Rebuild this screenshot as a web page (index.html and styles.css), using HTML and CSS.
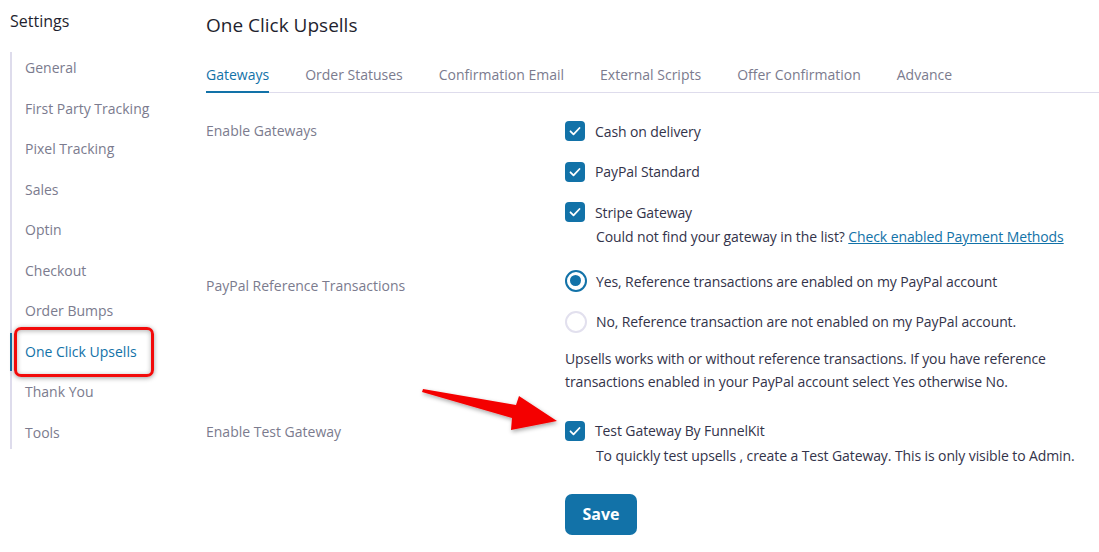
FILE: index.html
```html
<!DOCTYPE html>
<html lang="en">
<head>
    <meta charset="UTF-8">
    <meta name="viewport" content="width=device-width, initial-scale=1.0">
    <title>One Click Upsells - Settings</title>
    <link rel="stylesheet" href="styles.css">
</head>
<body>

    <div class="page">

        <!-- Settings sidebar -->
        <aside class="sidebar">
            <h2 class="sidebar-title">Settings</h2>
            <ul class="side-nav">
                <li>General</li>
                <li>First Party Tracking</li>
                <li>Pixel Tracking</li>
                <li>Sales</li>
                <li>Optin</li>
                <li>Checkout</li>
                <li>Order Bumps</li>
                <li class="active">One Click Upsells</li>
                <li>Thank You</li>
                <li>Tools</li>
            </ul>
        </aside>

        <!-- Main settings panel -->
        <main class="main">
            <h1 class="page-title">One Click Upsells</h1>

            <nav class="tabs">
                <a class="tab active">Gateways</a>
                <a class="tab">Order Statuses</a>
                <a class="tab">Confirmation Email</a>
                <a class="tab">External Scripts</a>
                <a class="tab">Offer Confirmation</a>
                <a class="tab">Advance</a>
            </nav>

            <div class="form">

                <div class="row row-gateways">
                    <div class="label">Enable Gateways</div>
                    <div class="field">
                        <div class="options">
                            <label class="option"><span class="check"><svg viewBox="0 0 20 20"><path d="M5.5 10.3l3 3 6-6.3"/></svg></span>Cash on delivery</label>
                            <label class="option"><span class="check"><svg viewBox="0 0 20 20"><path d="M5.5 10.3l3 3 6-6.3"/></svg></span>PayPal Standard</label>
                            <label class="option"><span class="check"><svg viewBox="0 0 20 20"><path d="M5.5 10.3l3 3 6-6.3"/></svg></span>Stripe Gateway</label>
                        </div>
                        <p class="help indent">Could not find your gateway in the list? <a href="#">Check enabled Payment Methods</a></p>
                    </div>
                </div>

                <div class="row row-reference">
                    <div class="label">PayPal Reference Transactions</div>
                    <div class="field">
                        <div class="options">
                            <label class="option"><span class="radio checked"></span>Yes, Reference transactions are enabled on my PayPal account</label>
                            <label class="option"><span class="radio"></span>No, Reference transaction are not enabled on my PayPal account.</label>
                        </div>
                        <p class="help note">Upsells works with or without reference transactions. If you have reference<br>transactions enabled in your PayPal account select Yes otherwise No.</p>
                    </div>
                </div>

                <div class="row row-test">
                    <div class="label">Enable Test Gateway</div>
                    <div class="field">
                        <label class="option"><span class="check"><svg viewBox="0 0 20 20"><path d="M5.5 10.3l3 3 6-6.3"/></svg></span>Test Gateway By FunnelKit</label>
                        <p class="help indent">To quickly test upsells , create a Test Gateway. This is only visible to Admin.</p>
                    </div>
                </div>

                <div class="row row-save">
                    <div class="label"></div>
                    <div class="field">
                        <button class="save-btn">Save</button>
                    </div>
                </div>

            </div>
        </main>

    </div>

    <!-- Annotation arrow pointing to the test gateway -->
    <svg class="arrow" viewBox="0 0 160 60" width="160" height="60">
        <defs>
            <filter id="shadow" x="-20%" y="-40%" width="140%" height="200%">
                <feDropShadow dx="1" dy="2" stdDeviation="2" flood-color="#000" flood-opacity="0.35"/>
            </filter>
        </defs>
        <polygon points="8,9 101,25 104,16 142,41 96,50 97,38 7,12" fill="#f40000" filter="url(#shadow)"/>
    </svg>

</body>
</html>
```

FILE: styles.css
```css
body {
    font-family: "Open Sans", "Noto Sans", Arial, sans-serif;
    background-color: #ffffff;
    color: #3a3a4c;
    margin: 0;
    padding: 0;
}

.page {
    display: flex;
}

/* Sidebar */

.sidebar {
    width: 206px;
    flex-shrink: 0;
    padding-left: 10px;
    box-sizing: border-box;
}

.sidebar-title {
    font-size: 16px;
    font-weight: 500;
    color: #1f1f2f;
    margin: 10px 0 0;
    line-height: 22px;
}

.side-nav {
    list-style: none;
    margin: 20px 0 0;
    padding: 0;
    border-left: 2px solid #dedcec;
    display: flex;
    flex-direction: column;
    gap: 2.5px;
}

.side-nav li {
    position: relative;
    margin-left: -2px;
    border-left: 2px solid transparent;
    padding: 9px 0 9px 13px;
    line-height: 20px;
    font-size: 14px;
    font-weight: 500;
    color: #7b7b8e;
}

.side-nav li:first-child {
    margin-top: -3px;
}

.side-nav li:last-child {
    padding-bottom: 6px;
}

.side-nav li.active {
    color: #1272a8;
    border-left-color: #1272a8;
}

.side-nav li.active::after {
    content: "";
    position: absolute;
    left: 2px;
    top: -6px;
    width: 140px;
    height: 50px;
    box-sizing: border-box;
    border: 3px solid #f20a0a;
    border-radius: 7px;
    box-shadow: 0 1px 5px rgba(0, 0, 0, 0.4), inset 0 1px 5px rgba(0, 0, 0, 0.3);
}

/* Main */

.main {
    flex: 1;
}

.page-title {
    font-size: 19px;
    font-weight: 500;
    color: #1f1f2f;
    margin: 13px 0 0;
    line-height: 24px;
}

.tabs {
    display: flex;
    gap: 36px;
    margin-top: 27px;
    border-bottom: 1px solid #dedcec;
}

.tab {
    font-size: 14px;
    font-weight: 500;
    color: #7b7b8e;
    line-height: 20px;
    padding: 1px 0 6px;
    border-bottom: 2px solid transparent;
    margin-bottom: -1px;
}

.tab.active {
    color: #1272a8;
    border-bottom-color: #1272a8;
}

/* Form rows */

.form {
    display: flex;
    flex-direction: column;
}

.row {
    display: grid;
    grid-template-columns: 359px 1fr;
}

.label {
    font-size: 14px;
    color: #7b7b8e;
    line-height: 20px;
}

.row-gateways {
    margin-top: 27px;
}

.row-gateways .label {
    padding-top: 1px;
}

.row-reference {
    margin-top: 23px;
}

.row-reference .label {
    padding-top: 6px;
}

.row-test {
    margin-top: 27px;
}

.row-test .label {
    padding-top: 2px;
}

.row-save {
    margin-top: 28px;
}

.options {
    display: flex;
    flex-direction: column;
    gap: 18.5px;
}

.option {
    display: flex;
    align-items: center;
    height: 22px;
    font-size: 14px;
    letter-spacing: -0.1px;
    color: #33334a;
}

.check {
    width: 20px;
    height: 20px;
    border-radius: 4px;
    background-color: #1272a8;
    margin-right: 10px;
    display: flex;
}

.check svg {
    width: 20px;
    height: 20px;
    fill: none;
    stroke: #ffffff;
    stroke-width: 1.8;
    stroke-linecap: round;
    stroke-linejoin: round;
}

.radio {
    width: 22px;
    height: 22px;
    box-sizing: border-box;
    border-radius: 50%;
    border: 2px solid #e2e0ee;
    margin-right: 9px;
    position: relative;
}

.radio.checked {
    border: 2.5px solid #1272a8;
}

.radio.checked::after {
    content: "";
    position: absolute;
    left: 3px;
    top: 3px;
    width: 11px;
    height: 11px;
    border-radius: 50%;
    background-color: #1272a8;
}

.help {
    margin: 4px 0 0;
    font-size: 14px;
    line-height: 20px;
    letter-spacing: -0.1px;
    color: #33334a;
}

.help.indent {
    padding-left: 31px;
}

.help.note {
    margin-top: 14px;
    line-height: 23px;
}

.help a {
    color: #1272a8;
}

.save-btn {
    font-family: inherit;
    font-size: 16px;
    font-weight: 700;
    color: #ffffff;
    background-color: #1272a8;
    border: none;
    border-radius: 7px;
    width: 72px;
    height: 41px;
    cursor: pointer;
}

.save-btn:hover {
    background-color: #0f6394;
}

/* Annotation overlay */

.arrow {
    position: absolute;
    left: 415px;
    top: 380px;
}
```
